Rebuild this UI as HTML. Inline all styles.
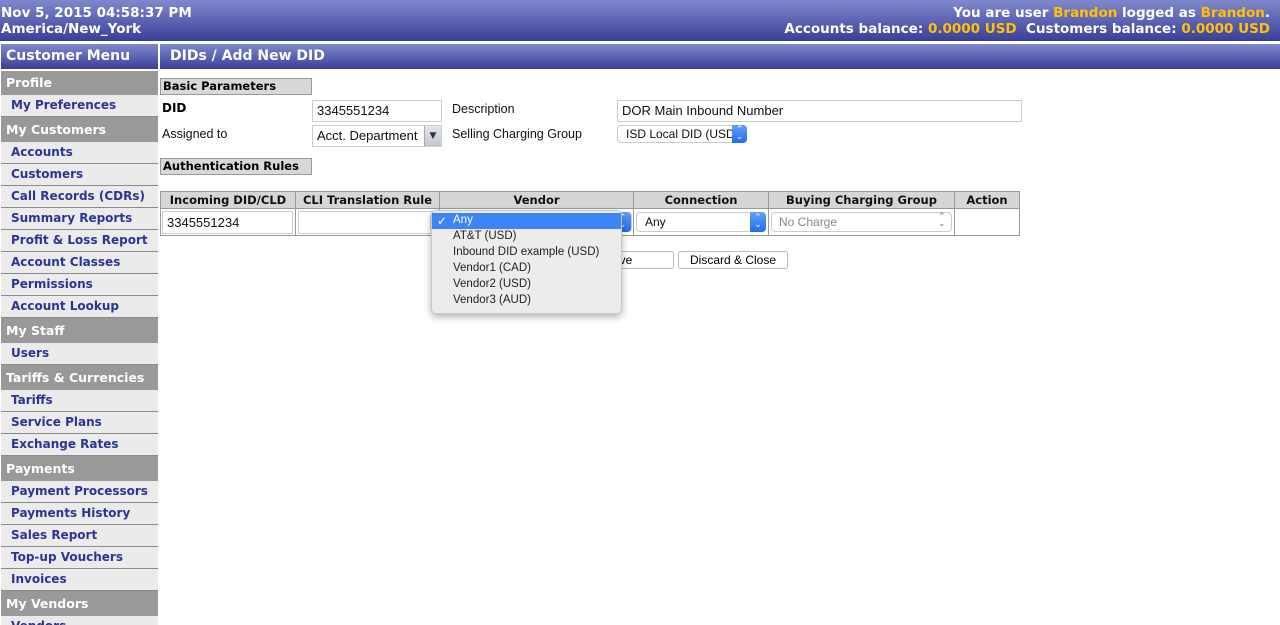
<!DOCTYPE html>
<html><head><meta charset="utf-8"><style>
*{box-sizing:border-box;margin:0;padding:0}
html{overflow:hidden;height:625px}
body{width:1280px;height:625px;overflow:hidden;background:#fff;font-family:"DejaVu Sans","Liberation Sans",sans-serif;position:relative}
.a{position:absolute}
.grad{background:linear-gradient(#8088cc,#3a3f98)}
.top{left:0;top:0;width:1280px;height:41px;color:#fff;font-weight:bold;font-size:13.5px;line-height:16px}
.y{color:#ffc107}
.sb{left:1px;width:157px;font-weight:bold;font-size:12px;padding-left:10px;line-height:21px;color:#2c3593;background:#ebebeb;border-bottom:1px solid #8a8a8a;white-space:nowrap}
.sh{left:1px;width:157px;font-weight:bold;font-size:12.5px;padding-left:5px;color:#fff;background:#999;white-space:nowrap}
.lbl{font-family:"Liberation Sans",sans-serif;font-size:12.5px;color:#111}
.inp{border:1px solid #ccc;background:#fff;font-family:"Liberation Sans",sans-serif;font-size:13px;padding-left:4px;color:#111;white-space:nowrap;overflow:hidden}
.sec{background:#d8d8d8;border:1px solid #999;font-weight:bold;font-size:11.5px;padding-left:2px;line-height:15px}
.th{top:191px;height:18px;background:#d6d6d6;border:1px solid #999;font-weight:bold;font-size:11.5px;text-align:center;line-height:16px;color:#111}
.td{top:208px;height:28px;border:1px solid #999}
.btn{border:1px solid #bbb;border-radius:3px;background:#fff;font-family:"Liberation Sans",sans-serif;font-size:12px;text-align:center;line-height:16px}
.blu{background:linear-gradient(#64a0fa,#1f6ef0);border-radius:0 4px 4px 0;color:#fff;font-size:9px;text-align:center;line-height:7px;padding-top:2px}
.dd{font-family:"Liberation Sans",sans-serif;font-size:11.5px;color:#222;left:453px}
</style></head><body>
<div class="a grad top"><div class="a" style="left:1px;top:5px">Nov 5, 2015 04:58:37 PM<br>America/New_York</div>
<div class="a" style="right:10px;top:5px;text-align:right;white-space:nowrap">You are user <span class="y">Brandon</span> logged as <span class="y">Brandon</span>.<br>Accounts balance: <span class="y">0.0000 USD</span>&nbsp; Customers balance: <span class="y">0.0000 USD</span></div></div>

<div class="a grad" style="left:1px;top:44px;width:157px;height:25px;color:#fff;font-weight:bold;font-size:14px;line-height:25px;padding-left:5px">Customer Menu</div>
<div class="a grad" style="left:160px;top:44px;width:1120px;height:25px;color:#fff;font-weight:bold;font-size:14px;line-height:25px;padding-left:10px">DIDs / Add New DID</div>

<div class="a sh" style="top:71px;height:24px;line-height:24px">Profile</div>
<div class="a sb" style="top:95px;height:22px">My Preferences</div>
<div class="a sh" style="top:117px;height:25px;line-height:25px">My Customers</div>
<div class="a sb" style="top:142px;height:22px">Accounts</div>
<div class="a sb" style="top:164px;height:22px">Customers</div>
<div class="a sb" style="top:186px;height:22px">Call Records (CDRs)</div>
<div class="a sb" style="top:208px;height:22px">Summary Reports</div>
<div class="a sb" style="top:230px;height:22px">Profit &amp; Loss Report</div>
<div class="a sb" style="top:252px;height:22px">Account Classes</div>
<div class="a sb" style="top:274px;height:22px">Permissions</div>
<div class="a sb" style="top:296px;height:22px">Account Lookup</div>
<div class="a sh" style="top:318px;height:25px;line-height:25px">My Staff</div>
<div class="a sb" style="top:343px;height:22px">Users</div>
<div class="a sh" style="top:365px;height:25px;line-height:25px">Tariffs &amp; Currencies</div>
<div class="a sb" style="top:390px;height:22px">Tariffs</div>
<div class="a sb" style="top:412px;height:22px">Service Plans</div>
<div class="a sb" style="top:434px;height:22px">Exchange Rates</div>
<div class="a sh" style="top:456px;height:25px;line-height:25px">Payments</div>
<div class="a sb" style="top:481px;height:22px">Payment Processors</div>
<div class="a sb" style="top:503px;height:22px">Payments History</div>
<div class="a sb" style="top:525px;height:22px">Sales Report</div>
<div class="a sb" style="top:547px;height:22px">Top-up Vouchers</div>
<div class="a sb" style="top:569px;height:22px">Invoices</div>
<div class="a sh" style="top:591px;height:25px;line-height:25px">My Vendors</div>
<div class="a sb" style="top:616px;height:22px">Vendors</div>

<div class="a sec" style="left:160px;top:78px;width:152px;height:17px">Basic Parameters</div>
<div class="a" style="left:162px;top:101px;font-weight:bold;font-size:12px">DID</div>
<div class="a lbl" style="left:162px;top:127px">Assigned to</div>
<div class="a inp" style="left:312px;top:100px;width:130px;height:22px;line-height:20px">3345551234</div>
<div class="a inp" style="left:312px;top:125px;width:130px;height:22px;line-height:20px">Acct. Department</div>
<div class="a" style="left:424px;top:126px;width:17px;height:20px;background:linear-gradient(#e4e6ec,#c3c7d2);border-left:1px solid #aaa;color:#334;font-size:9px;text-align:center;line-height:20px">▼</div>
<div class="a lbl" style="left:452px;top:102px">Description</div>
<div class="a lbl" style="left:452px;top:127px">Selling Charging Group</div>
<div class="a inp" style="left:617px;top:100px;width:405px;height:22px;line-height:20px">DOR Main Inbound Number</div>
<div class="a inp" style="left:617px;top:125px;width:130px;height:18px;line-height:16px;border-radius:4px;font-size:12px;padding-left:8px">ISD Local DID (USD</div>
<div class="a blu" style="left:732px;top:125px;width:15px;height:18px">⌃<br>⌄</div>

<div class="a sec" style="left:160px;top:158px;width:152px;height:17px">Authentication Rules</div>

<div class="a th" style="left:160px;width:136px">Incoming DID/CLD</div>
<div class="a th" style="left:295px;width:145px">CLI Translation Rule</div>
<div class="a th" style="left:439px;width:195px">Vendor</div>
<div class="a th" style="left:633px;width:136px">Connection</div>
<div class="a th" style="left:768px;width:187px">Buying Charging Group</div>
<div class="a th" style="left:954px;width:66px">Action</div>
<div class="a td" style="left:160px;width:136px"></div>
<div class="a td" style="left:295px;width:145px"></div>
<div class="a td" style="left:439px;width:195px"></div>
<div class="a td" style="left:633px;width:136px"></div>
<div class="a td" style="left:768px;width:187px"></div>
<div class="a td" style="left:954px;width:66px"></div>
<div class="a inp" style="left:162px;top:211px;width:131px;height:23px;line-height:21px">3345551234</div>
<div class="a inp" style="left:298px;top:211px;width:138px;height:23px"></div>
<div class="a inp" style="left:430px;top:212px;width:202px;height:20px;border-radius:4px"></div>
<div class="a blu" style="left:614px;top:212px;width:17px;height:20px;padding-top:3px">⌃<br>⌄</div>
<div class="a inp" style="left:636px;top:212px;width:130px;height:20px;border-radius:4px;font-size:12px;line-height:18px;padding-left:8px">Any</div>
<div class="a blu" style="left:750px;top:212px;width:16px;height:20px;padding-top:3px">⌃<br>⌄</div>
<div class="a inp" style="left:771px;top:212px;width:181px;height:20px;border-radius:4px;font-size:12px;line-height:18px;padding-left:7px;color:#888">No Charge</div>
<div class="a" style="left:938px;top:214px;font-size:9px;color:#777;line-height:7px">⌃<br>⌄</div>

<div class="a btn" style="left:598px;top:251px;width:76px;height:18px;text-align:left;padding-left:6px">Save</div>
<div class="a btn" style="left:678px;top:251px;width:110px;height:18px">Discard &amp; Close</div>

<div class="a" style="left:431px;top:210px;width:191px;height:104px;background:#ececec;border:1px solid #c8c8c8;border-radius:5px;box-shadow:0 3px 8px rgba(0,0,0,.3)"></div>
<div class="a" style="left:432px;top:213px;width:189px;height:16px;background:#3d85f7"></div>
<div class="a" style="left:437px;top:213px;color:#fff;font-size:12px;line-height:16px;font-family:'Liberation Sans',sans-serif">✓</div>
<div class="a dd" style="top:214px;color:#fff">Any</div>
<div class="a dd" style="top:230px">AT&amp;T (USD)</div>
<div class="a dd" style="top:246px">Inbound DID example (USD)</div>
<div class="a dd" style="top:262px">Vendor1 (CAD)</div>
<div class="a dd" style="top:278px">Vendor2 (USD)</div>
<div class="a dd" style="top:294px">Vendor3 (AUD)</div>
</body></html>
